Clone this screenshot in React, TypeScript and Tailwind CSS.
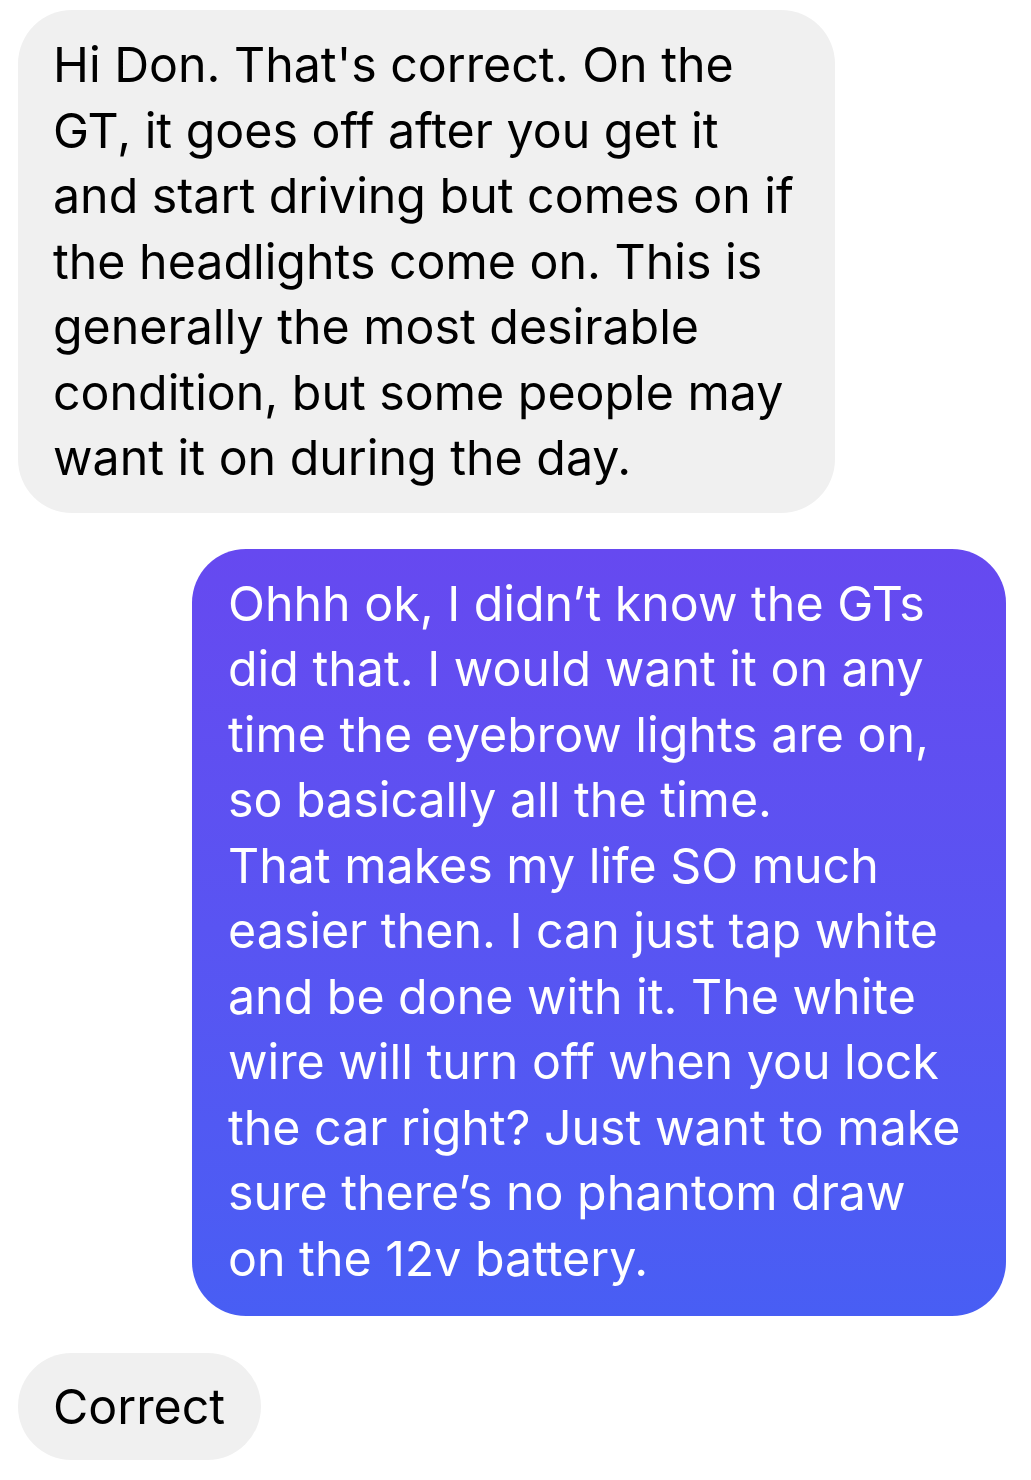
const font = { fontFamily: 'Inter, "Noto Sans", sans-serif' }

const first = [
  'Hi Don. That\'s correct. On the',
  'GT, it goes off after you get it',
  'and start driving but comes on if',
  'the headlights come on. This is',
  'generally the most desirable',
  'condition, but some people may',
  'want it on during the day.',
]

const reply = [
  'Ohhh ok, I didn’t know the GTs',
  'did that. I would want it on any',
  'time the eyebrow lights are on,',
  'so basically all the time.',
  'That makes my life SO much',
  'easier then. I can just tap white',
  'and be done with it. The white',
  'wire will turn off when you lock',
  'the car right? Just want to make',
  'sure there’s no phantom draw',
  'on the 12v battery.',
]

function Lines({ lines }: { lines: string[] }) {
  return (
    <>
      {lines.map((l, i) => (
        <div key={i} className="whitespace-nowrap">
          {l}
        </div>
      ))}
    </>
  )
}

export default function App() {
  return (
    <div className="min-h-[1480px] w-[1031px] bg-white text-[48.3px] leading-[65.5px]" style={font}>
      <div className="flex flex-col pt-[10px]">
        <div className="ml-[18px] w-[817px] rounded-[54px] bg-[#f0f0f0] pl-[35px] pr-6 pt-[22px] pb-[22px] text-black">
          <Lines lines={first} />
        </div>
        <div className="mt-[36px] ml-[192px] w-[814px] rounded-[54px] bg-gradient-to-b from-[#6649f0] to-[#485ef4] pl-[36px] pr-6 pt-[22px] pb-[25px] text-white">
          <Lines lines={reply} />
        </div>
        <div className="mt-[37px] ml-[18px] flex h-[107px] w-[243px] items-center rounded-full bg-[#f0f0f0] pl-[35px] text-black">
          Correct
        </div>
      </div>
    </div>
  )
}
